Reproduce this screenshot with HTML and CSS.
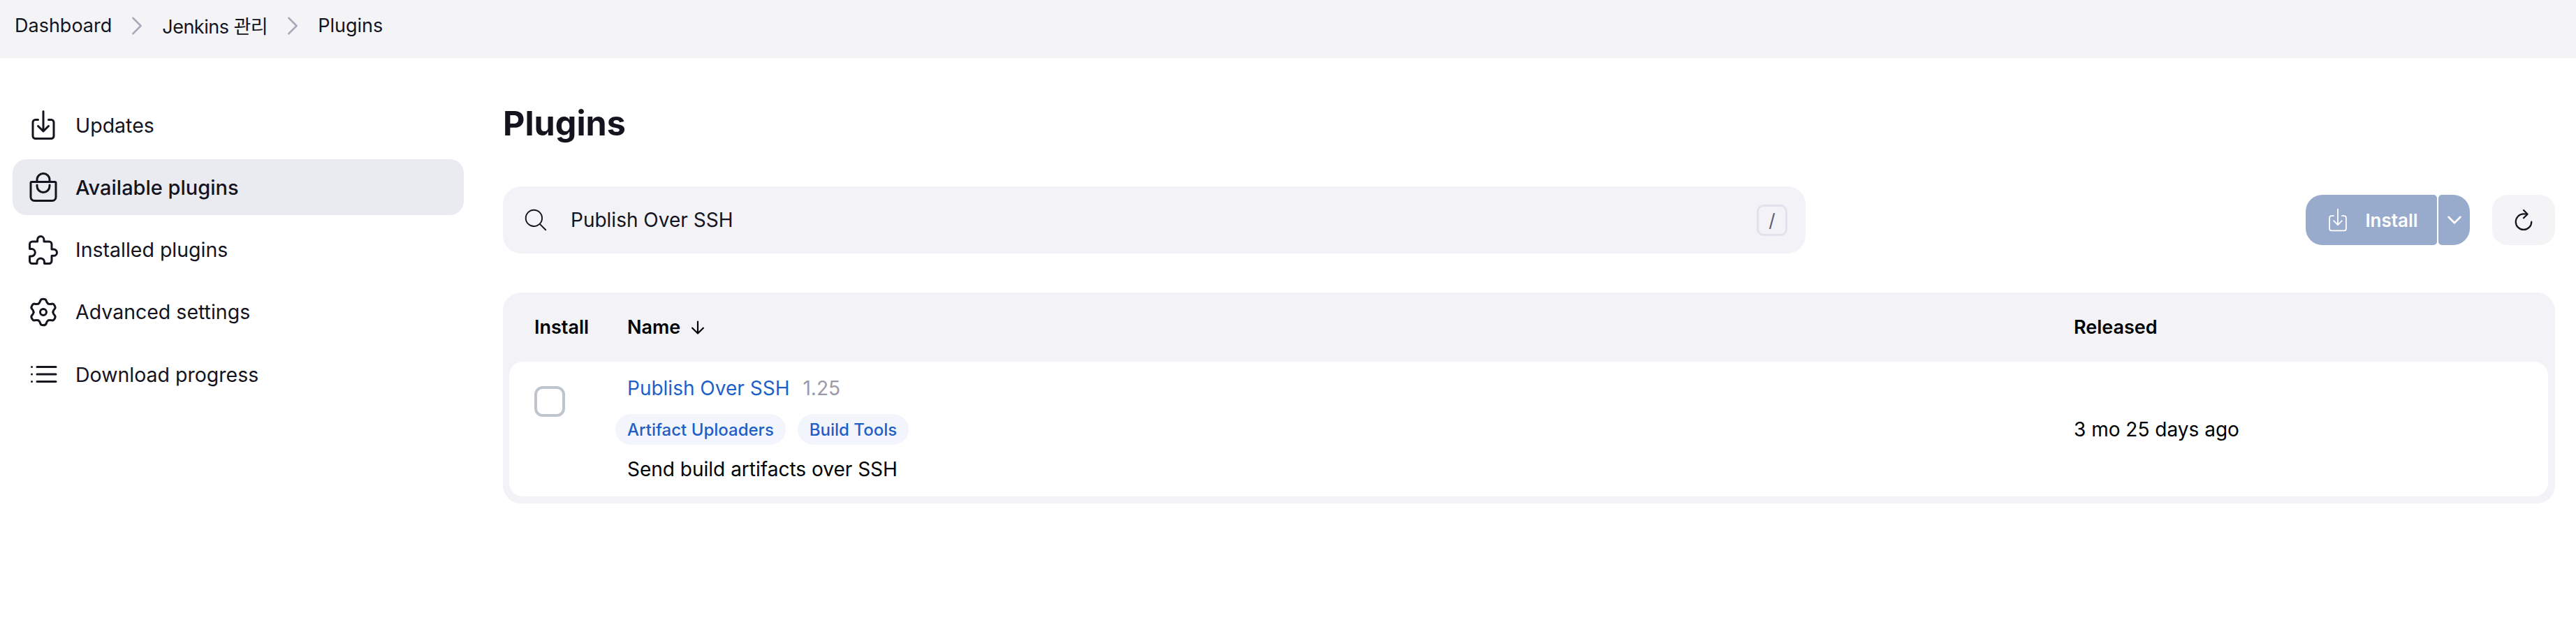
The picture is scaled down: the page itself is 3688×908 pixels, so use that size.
FILE: index.html
```html
<!DOCTYPE html>
<html lang="ko">
<head>
    <meta charset="UTF-8">
    <title>Plugins - Jenkins</title>
    <link rel="stylesheet" href="styles.css">
</head>
<body>
    <nav class="breadcrumbs">
        <a class="crumb" href="#">Dashboard</a>
        <svg class="crumb-sep" viewBox="0 0 512 512"><path d="M184 112l144 144-144 144"/></svg>
        <a class="crumb crumb-manage" href="#">Jenkins 관리</a>
        <svg class="crumb-sep" viewBox="0 0 512 512"><path d="M184 112l144 144-144 144"/></svg>
        <a class="crumb" href="#">Plugins</a>
    </nav>

    <div class="page">
        <aside class="side-panel">
            <a class="task" href="#">
                <svg class="task-icon" viewBox="0 0 512 512"><path d="M336 176h40a40 40 0 0140 40v208a40 40 0 01-40 40H136a40 40 0 01-40-40V216a40 40 0 0140-40h40"/><path d="M176 272l80 80 80-80M256 48v288"/></svg>
                Updates
            </a>
            <a class="task task-active" href="#">
                <svg class="task-icon" viewBox="0 0 512 512"><path d="M80 176a16 16 0 00-16 16v216c0 30.24 25.76 56 56 56h272c30.24 0 56-24.51 56-54.75V192a16 16 0 00-16-16zM160 176v-32a96 96 0 0196-96h0a96 96 0 0196 96v32"/><path d="M160 224v16a96 96 0 0096 96h0a96 96 0 0096-96v-16"/></svg>
                Available plugins
            </a>
            <a class="task" href="#">
                <svg class="task-icon" viewBox="0 0 512 512"><path d="M413.66 246.1H386a2 2 0 01-2-2v-77.24A38.86 38.86 0 00345.14 128H267.9a2 2 0 01-2-2V98.34c0-27.14-21.5-49.86-48.64-50.33a49.53 49.53 0 00-50.4 49.51V126a2 2 0 01-2 2H87.62A39.74 39.74 0 0048 167.62V238a2 2 0 002 2h26.91c29.37 0 53.68 25.48 54.09 54.85.42 29.87-23.51 57.15-53.29 57.15H50a2 2 0 00-2 2v70.38A39.74 39.74 0 0087.62 464H158a2 2 0 002-2v-20.93c0-30.28 24.75-56.35 55-57.06 30.1-.7 57 20.31 57 50.28V462a2 2 0 002 2h71.14A38.86 38.86 0 00384 425.14v-78a2 2 0 012-2h28.48c27.63 0 49.52-22.67 49.52-50.4s-23.2-48.64-50.34-48.64z"/></svg>
                Installed plugins
            </a>
            <a class="task" href="#">
                <svg class="task-icon" viewBox="0 0 512 512">
                    <circle cx="256" cy="256" r="48"/>
                    <path d="M182 128C199 118 205 105 212 80C218 60 232 56 256 56C280 56 294 60 300 80C307 105 313 118 330 128"/>
                    <path transform="rotate(60 256 256)" d="M182 128C199 118 205 105 212 80C218 60 232 56 256 56C280 56 294 60 300 80C307 105 313 118 330 128"/>
                    <path transform="rotate(120 256 256)" d="M182 128C199 118 205 105 212 80C218 60 232 56 256 56C280 56 294 60 300 80C307 105 313 118 330 128"/>
                    <path transform="rotate(180 256 256)" d="M182 128C199 118 205 105 212 80C218 60 232 56 256 56C280 56 294 60 300 80C307 105 313 118 330 128"/>
                    <path transform="rotate(240 256 256)" d="M182 128C199 118 205 105 212 80C218 60 232 56 256 56C280 56 294 60 300 80C307 105 313 118 330 128"/>
                    <path transform="rotate(300 256 256)" d="M182 128C199 118 205 105 212 80C218 60 232 56 256 56C280 56 294 60 300 80C307 105 313 118 330 128"/>
                </svg>
                Advanced settings
            </a>
            <a class="task" href="#">
                <svg class="task-icon" viewBox="0 0 512 512"><path d="M160 144h288M160 256h288M160 368h288"/><circle class="dot" cx="80" cy="144" r="16"/><circle class="dot" cx="80" cy="256" r="16"/><circle class="dot" cx="80" cy="368" r="16"/></svg>
                Download progress
            </a>
        </aside>

        <main class="content">
            <h1 class="page-title">Plugins</h1>

            <div class="toolbar">
                <div class="search-bar">
                    <svg class="search-icon" viewBox="0 0 512 512"><path d="M221.09 64a157.09 157.09 0 10157.09 157.09A157.1 157.1 0 00221.09 64z"/><path d="M338.29 338.29L448 448"/></svg>
                    <span class="search-text">Publish Over SSH</span>
                    <kbd class="search-key">/</kbd>
                </div>
                <div class="toolbar-actions">
                    <div class="split-button">
                        <button class="install-button">
                            <svg class="install-icon" viewBox="0 0 512 512"><path d="M336 176h40a40 40 0 0140 40v208a40 40 0 01-40 40H136a40 40 0 01-40-40V216a40 40 0 0140-40h40"/><path d="M176 272l80 80 80-80M256 48v288"/></svg>
                            Install
                        </button>
                        <button class="install-more">
                            <svg class="more-icon" viewBox="0 0 512 512"><path d="M112 184l144 144 144-144"/></svg>
                        </button>
                    </div>
                    <button class="refresh-button">
                        <svg class="refresh-icon" viewBox="0 0 512 512"><path d="M320 146s24.36-12-64-12a160 160 0 10160 160"/><path d="M256 58l80 80-80 80"/></svg>
                    </button>
                </div>
            </div>

            <div class="plugin-table-wrap">
                <table class="plugin-table">
                    <colgroup>
                        <col class="col-install">
                        <col class="col-name">
                        <col class="col-released">
                    </colgroup>
                    <thead>
                        <tr>
                            <th>Install</th>
                            <th>Name <svg class="sort-icon" viewBox="0 0 512 512"><path d="M112 268l144 144 144-144M256 392V100"/></svg></th>
                            <th>Released</th>
                        </tr>
                    </thead>
                    <tbody>
                        <tr>
                            <td class="cell-check"><span class="checkbox"></span></td>
                            <td class="cell-plugin">
                                <div class="plugin-title">
                                    <a class="plugin-link" href="#">Publish Over SSH</a>
                                    <span class="plugin-version">1.25</span>
                                </div>
                                <div class="plugin-tags">
                                    <a class="tag" href="#">Artifact Uploaders</a>
                                    <a class="tag" href="#">Build Tools</a>
                                </div>
                                <div class="plugin-desc">Send build artifacts over SSH</div>
                            </td>
                            <td class="cell-released">3 mo 25 days ago</td>
                        </tr>
                    </tbody>
                </table>
            </div>
        </main>
    </div>
</body>
</html>
```

FILE: styles.css
```css
html, body {
    margin: 0;
    padding: 0;
    background-color: #fff;
    color: #14141f;
    font-family: Inter, "Noto Sans CJK KR", sans-serif;
    font-size: 28px;
    font-weight: 400;
}

a {
    color: inherit;
    text-decoration: none;
}

svg {
    fill: none;
    stroke: currentColor;
    stroke-width: 32;
    stroke-linecap: round;
    stroke-linejoin: round;
    flex: none;
}

button {
    border: none;
    font-family: inherit;
    padding: 0;
}

/* Breadcrumb bar */
.breadcrumbs {
    height: 83px;
    padding: 0 21px 10px;
    box-sizing: border-box;
    background-color: #f4f4f6;
    display: flex;
    align-items: center;
    gap: 16px;
    font-size: 27px;
}

.crumb-manage {
    letter-spacing: -0.5px;
}

.crumb-sep {
    width: 40px;
    height: 40px;
    color: #a9a9b9;
}

/* Side panel */
.page {
    display: grid;
    grid-template-columns: 646px 1fr;
    column-gap: 56px;
    padding: 56px 30px 0 18px;
}

.side-panel {
    display: flex;
    flex-direction: column;
    gap: 9.25px;
    font-size: 28.5px;
    font-weight: 430;
}

.task {
    height: 80px;
    padding-left: 20px;
    border-radius: 20px;
    display: flex;
    align-items: center;
    gap: 22px;
}

.task-active {
    background-color: #eaebf0;
    font-size: 29px;
    font-weight: 500;
}

.task-icon {
    width: 48px;
    height: 48px;
}

.dot {
    fill: currentColor;
    stroke: none;
}

/* Main content */
.page-title {
    margin: 0;
    font-size: 48.5px;
    font-weight: 700;
    line-height: 58px;
    padding-top: 9px;
}

.toolbar {
    margin-top: 61px;
    display: flex;
    align-items: center;
    justify-content: space-between;
}

.search-bar {
    width: 1865px;
    height: 96px;
    box-sizing: border-box;
    padding: 0 26px 0 28px;
    border-radius: 26px;
    background-color: #f2f2f7;
    display: flex;
    align-items: center;
}

.search-icon {
    width: 38px;
    height: 38px;
    stroke-width: 26;
}

.search-text {
    margin-left: 31px;
    flex: 1;
}

.search-key {
    width: 44px;
    height: 45px;
    box-sizing: border-box;
    border: 3px solid #e2e2ec;
    border-radius: 10px;
    display: flex;
    align-items: center;
    justify-content: center;
    font-family: inherit;
    font-size: 26px;
    color: #5c5c78;
}

.toolbar-actions {
    display: flex;
    align-items: center;
    gap: 32px;
}

.split-button {
    display: flex;
    gap: 2px;
}

.install-button {
    width: 188px;
    height: 72px;
    border-radius: 24px 5px 5px 24px;
    background-color: #99abcc;
    color: #fff;
    font-size: 26px;
    font-weight: 600;
    display: flex;
    align-items: center;
    justify-content: center;
    gap: 20px;
}

.install-icon {
    width: 38px;
    height: 38px;
    stroke-width: 24;
}

.install-more {
    width: 45px;
    height: 72px;
    border-radius: 5px 24px 24px 5px;
    background-color: #99abcc;
    color: #fff;
    display: flex;
    align-items: center;
    justify-content: center;
}

.more-icon {
    width: 30px;
    height: 30px;
    stroke-width: 44;
}

.refresh-button {
    width: 90px;
    height: 72px;
    border-radius: 22px;
    background-color: #f4f4f6;
    color: #14141f;
    display: flex;
    align-items: center;
    justify-content: center;
}

.refresh-icon {
    width: 36px;
    height: 36px;
    stroke-width: 32;
}

/* Plugin table */
.plugin-table-wrap {
    margin-top: 56px;
    padding: 0 10px 10px 9px;
    border-radius: 26px;
    background-color: #f2f2f7;
}

.plugin-table {
    width: 100%;
    table-layout: fixed;
    border-collapse: separate;
    border-spacing: 0;
    color: #000;
    font-size: 28px;
}

.col-install {
    width: 169px;
}

.col-released {
    width: 679px;
}

.plugin-table th {
    height: 99px;
    padding: 0 0 0 36px;
    text-align: left;
    font-weight: 600;
    font-size: 27px;
}

.plugin-table th + th {
    padding-left: 0;
}

.sort-icon {
    width: 28px;
    height: 28px;
    margin-left: 4px;
    vertical-align: -5px;
    stroke-width: 40;
}

.plugin-table td {
    height: 193px;
    padding: 0;
    background-color: #fff;
    box-sizing: border-box;
}

.plugin-table td:first-child {
    border-radius: 20px 0 0 20px;
}

.plugin-table td:last-child {
    border-radius: 0 20px 20px 0;
}

.plugin-table td.cell-check {
    padding: 35px 0 0 36px;
    vertical-align: top;
}

.plugin-table td.cell-plugin {
    padding-top: 21px;
    vertical-align: top;
}

.checkbox {
    display: block;
    width: 44px;
    height: 44px;
    box-sizing: border-box;
    border: 4px solid #bec5cd;
    border-radius: 12px;
}

.plugin-title {
    height: 38px;
    display: flex;
    align-items: baseline;
    gap: 19px;
}

.plugin-link {
    color: #1e5fc8;
}

.plugin-version {
    color: #9a9aa9;
}

.plugin-tags {
    margin: 16px 0 18px -17px;
    display: flex;
    gap: 17px;
}

.tag {
    height: 44px;
    padding: 0 17px;
    border-radius: 22px;
    background-color: #f2f5fc;
    color: #1e5fc8;
    font-size: 24px;
    font-weight: 450;
    display: flex;
    align-items: center;
}

.plugin-desc {
    line-height: 34px;
}
```
